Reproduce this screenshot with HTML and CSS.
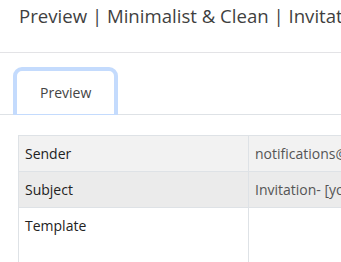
FILE: index.html
```html
<!DOCTYPE html>
<html lang="en">
<head>
    <meta charset="UTF-8">
    <title>Preview</title>
    <link rel="stylesheet" href="styles.css">
</head>
<body>
    <div class="page-header">
        <h1>Preview | Minimalist &amp; Clean | Invitation</h1>
    </div>

    <ul class="tabs">
        <li class="tab active">Preview</li>
    </ul>

    <table class="details">
        <tr class="row-odd">
            <td class="label">Sender</td>
            <td class="value">notifications@example.com</td>
        </tr>
        <tr class="row-hover">
            <td class="label">Subject</td>
            <td class="value">Invitation- [your name] invited you</td>
        </tr>
        <tr class="row-template">
            <td class="label">Template</td>
            <td class="value"></td>
        </tr>
    </table>
</body>
</html>
```

FILE: styles.css
```css
body { margin: 0; font-family: "Open Sans", sans-serif; color: #212529; overflow: hidden; }
.page-header { height: 52px; border-bottom: 1px solid #e3e3e6; }
.page-header h1 { margin: 0; padding: 3px 0 0 19px; font-size: 18.6px; font-weight: 400; color: #3f3f3f; white-space: nowrap; }
.tabs { list-style: none; margin: 14px 0 0; padding: 0 0 0 13px; display: flex; border-bottom: 1px solid #dee2e6; }
.tab { font-size: 14px; line-height: 19px; padding: 12px 23px; color: #444; background: #fff; border: 4px solid #c4dbfd; border-bottom-width: 1px; border-radius: 9px 9px 0 0; margin-bottom: -1px; }
.details { margin: 20px 0 0 18px; border-collapse: collapse; width: 560px; font-size: 14px; line-height: 19px; }
.details td { border: 1px solid #dee2e6; padding: 8px 6px; vertical-align: top; }
.details .label { width: 217px; color: #222; }
.details .value { color: #555; white-space: nowrap; }
.row-odd td { background: #f2f2f2; }
.row-hover td { background: #ebebeb; }
.row-template td { height: 100px; }
```
